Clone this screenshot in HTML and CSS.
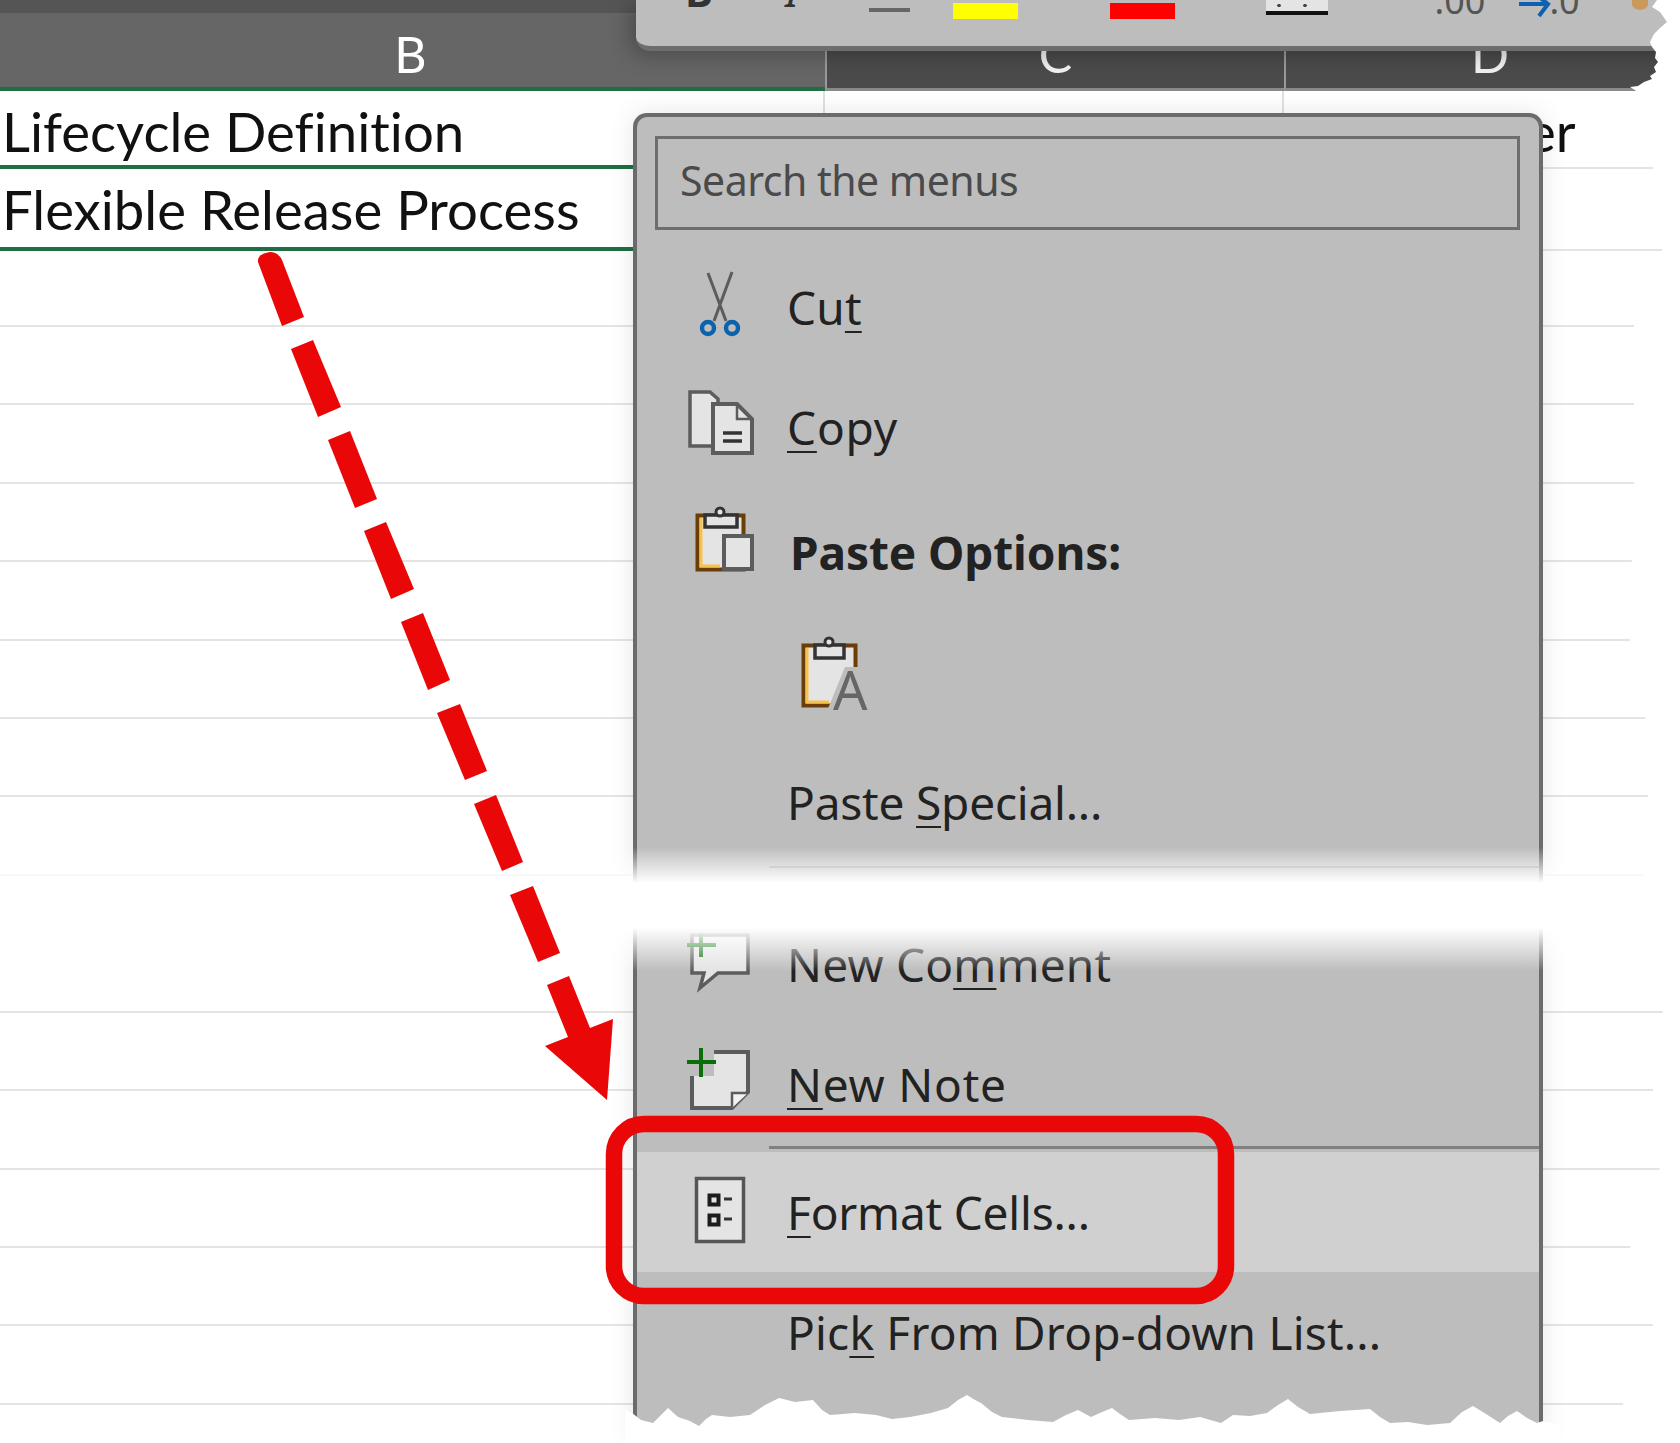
FILE: index.html
```html
<!DOCTYPE html>
<html lang="en">
<head>
    <meta charset="UTF-8">
    <title>Format Cells context menu</title>
    <link rel="stylesheet" href="styles.css">
</head>
<body>
    <div class="page">
        <!-- Sheet -->
        <div class="top-band"></div>
        <div class="columns">
            <div class="col col-b">B</div>
            <div class="col col-c">C</div>
            <div class="col col-d">D</div>
        </div>

        <div class="row row-one">
            <div class="cell cell-b">Lifecycle Definition</div>
            <div class="cell cell-c"></div>
            <div class="cell cell-d">er</div>
        </div>
        <div class="row row-two">
            <div class="cell cell-b">Flexible Release Process</div>
            <div class="cell cell-c"></div>
            <div class="cell cell-d"></div>
        </div>
        <div class="blank short"></div>
        <div class="blank"></div>
        <div class="blank"></div>
        <div class="blank"></div>
        <div class="blank"></div>
        <div class="blank"></div>
        <div class="blank"></div>
        <div class="blank"></div>
        <div class="blank tall"></div>
        <div class="blank"></div>
        <div class="blank"></div>
        <div class="blank"></div>
        <div class="blank"></div>
        <div class="blank"></div>

        <!-- Mini toolbar -->
        <div class="toolbar">
            <span class="tool-glyph bold">B</span>
            <span class="tool-glyph italic">I</span>
            <span class="tool-dash"></span>
            <span class="swatch yellow"></span>
            <span class="swatch red"></span>
            <span class="tool-border"></span>
            <span class="tool-num zeros">.00</span>
            <svg class="tool-arrow" width="32" height="18" viewBox="0 0 32 18">
                <path d="M0 4H28M20 -3L29 4L20 16" fill="none" stroke="#1060b0" stroke-width="4"/>
            </svg>
            <span class="tool-num zero">.0</span>
            <span class="tool-blob"></span>
        </div>

        <!-- Context menu -->
        <div class="menu">
            <div class="search">Search the menus</div>

            <div class="item">
                <svg class="icon" viewBox="0 0 80 80">
                    <path d="M28 4L46 52M52 3L34 52" fill="none" stroke="#5c5c5c" stroke-width="3"/>
                    <circle cx="28" cy="59" r="6" fill="none" stroke="#0b62ad" stroke-width="4.5"/>
                    <circle cx="52" cy="59" r="6" fill="none" stroke="#0b62ad" stroke-width="4.5"/>
                </svg>
                <span>Cu<u>t</u></span>
            </div>

            <div class="item">
                <svg class="icon" viewBox="0 0 80 80">
                    <path d="M10 3H30L38 10V57H10Z" fill="#e4e4e4" stroke="#5c5c5c" stroke-width="3.5"/>
                    <path d="M33 15H57L72 30V64H33Z" fill="#e4e4e4" stroke="#5c5c5c" stroke-width="4"/>
                    <path d="M57 15V30H72" fill="none" stroke="#5c5c5c" stroke-width="2.5"/>
                    <path d="M43 44H62M43 52H62" stroke="#333" stroke-width="3.5"/>
                </svg>
                <span class="wide"><u>C</u>opy</span>
            </div>

            <div class="item paste-head">
                <svg class="icon" viewBox="0 0 80 80">
                    <rect x="17.5" y="5.5" width="46" height="54" fill="#e4e4e4" stroke="#6b3d08" stroke-width="4"/>
                    <path d="M21 8V56H40" fill="none" stroke="#f5c24f" stroke-width="3"/>
                    <path d="M25 5H57V17H25Z" fill="#e4e4e4" stroke="#333" stroke-width="3.5"/>
                    <circle cx="40" cy="2" r="4" fill="#e4e4e4" stroke="#333" stroke-width="3"/>
                    <rect x="44" y="26" width="28" height="33" fill="#e4e4e4" stroke="#5c5c5c" stroke-width="4"/>
                </svg>
                <span class="head-label">Paste Options:</span>
            </div>

            <div class="item icon-only">
                <svg class="icon" viewBox="0 0 80 80">
                    <rect x="8.5" y="10.5" width="52" height="60" fill="#e4e4e4" stroke="#6b3d08" stroke-width="4"/>
                    <path d="M12 13V67H34" fill="none" stroke="#f5c24f" stroke-width="3"/>
                    <path d="M20 10H49V23H20Z" fill="#e4e4e4" stroke="#333" stroke-width="3.5"/>
                    <circle cx="34" cy="7" r="4" fill="#e4e4e4" stroke="#333" stroke-width="3"/>
                    <path d="M50 32H66V76H32Z" fill="#bdbdbd"/>
                    <text class="icon-letter" x="38" y="75">A</text>
                </svg>
            </div>

            <div class="item special">
                <span class="label-only tight">Paste <u>S</u>pecial...</span>
            </div>
            <div class="sep sep-soft"></div>

            <div class="item">
                <svg class="icon" viewBox="0 0 80 80">
                    <path d="M12 9H68V47H38L20 62L24 47H12Z" fill="#e4e4e4" stroke="#5c5c5c" stroke-width="3.5"/>
                    <path d="M7 19H36M21 7V31" stroke="#0a6e0a" stroke-width="4"/>
                </svg>
                <span>New Co<u>m</u>ment</span>
            </div>

            <div class="item">
                <svg class="icon" viewBox="0 0 80 80">
                    <path d="M12 6H68V46L52 62H12Z" fill="#e4e4e4" stroke="#5c5c5c" stroke-width="4"/>
                    <path d="M52 62V47H68" fill="#f2f2f2" stroke="#5c5c5c" stroke-width="2.5"/>
                    <rect x="2" y="0" width="32" height="30" fill="#bdbdbd"/>
                    <path d="M7 16H36M21 2V31" stroke="#0a6e0a" stroke-width="4"/>
                </svg>
                <span class="wide"><u>N</u>ew Note</span>
            </div>
            <div class="sep sep-hard"></div>

            <div class="item active">
                <svg class="icon" viewBox="0 0 80 80">
                    <rect x="16.5" y="6.5" width="47" height="63" fill="#e4e4e4" stroke="#555" stroke-width="3.5"/>
                    <rect x="29.5" y="23.5" width="9" height="9" fill="#e4e4e4" stroke="#1c1c1c" stroke-width="4"/>
                    <rect x="29.5" y="43.5" width="9" height="9" fill="#e4e4e4" stroke="#1c1c1c" stroke-width="4"/>
                    <path d="M44 27H52M44 47H52" stroke="#333" stroke-width="3"/>
                </svg>
                <span class="tight"><u>F</u>ormat Cells...</span>
            </div>

            <div class="item pick">
                <span class="label-only">Pic<u>k</u> From Drop-down List...</span>
            </div>
        </div>

        <!-- Torn out strip in the middle of the capture -->
        <div class="tear"></div>

        <!-- Callouts and torn paper edges -->
        <svg class="marks" width="1680" height="1443" viewBox="0 0 1680 1443">
            <path fill="#fff" d="M1657 0L1652 7L1660 12L1667 22L1660 28L1654 34L1650 42L1652 47L1656 52L1655 58L1658 62L1654 67L1656 72L1650 76L1652 79L1644 82L1638 86L1630 87L1638 92L1648 120L1653 168L1659 210L1663 247L1650 290L1634 325L1630 365L1634 404L1640 445L1634 482L1628 520L1632 560L1626 600L1630 640L1644 700L1650 780L1640 860L1655 940L1663 1011L1655 1050L1653 1090L1650 1130L1660 1168L1645 1210L1630 1246L1640 1285L1653 1325L1640 1365L1623 1404L1630 1443H1680V0Z"/>
            <path fill="#fff" d="M625 1443V1410L632 1413L641 1420L653 1423L661 1415L668 1408L678 1417L690 1421L699 1426L706 1419L712 1415L730 1417L750 1415L765 1405L779 1398L795 1402L813 1400L822 1410L830 1415L855 1413L876 1415L892 1419L910 1417L931 1413L948 1408L958 1400L967 1395L975 1400L981 1403L992 1412L1002 1417L1028 1420L1053 1422L1066 1415L1078 1410L1091 1417L1102 1412L1112 1408L1120 1414L1129 1420L1155 1418L1179 1420L1200 1417L1221 1423L1233 1415L1250 1416L1267 1413L1278 1405L1288 1399L1298 1407L1310 1414L1340 1411L1370 1409L1380 1417L1390 1423L1408 1422L1427 1425L1450 1423L1462 1412L1473 1406L1486 1414L1500 1423L1508 1416L1517 1411L1527 1418L1537 1423L1543 1421L1560 1425V1443Z"/>
            <g fill="#e90707">
                <path d="M258 262Q257 254 270 252Q278 252 282 260L304 317L282 326Z"/>
                <path d="M291 349L313 340L341 407L318 417Z"/>
                <path d="M328 440L350 431L377 499L355 508Z"/>
                <path d="M364 531L386 522L414 589L391 599Z"/>
                <path d="M401 622L423 613L450 680L428 690Z"/>
                <path d="M437 713L460 704L487 771L465 780Z"/>
                <path d="M474 804L496 795L523 862L502 871Z"/>
                <path d="M510 895L533 886L560 953L538 962Z"/>
                <path d="M547 985L569 976L590 1028L613 1019L607 1100L545 1046L568 1037Z"/>
            </g>
            <rect x="614" y="1124" width="612" height="172" rx="30" fill="none" stroke="#e90707" stroke-width="16.5"/>
        </svg>
    </div>
</body>
</html>
```

FILE: styles.css
```css
/* General Styles */
body {
    margin: 0;
    background: #fff;
    font-family: 'Noto Sans', sans-serif;
    overflow: hidden;
}

.page {
    position: relative;
    width: 1680px;
    height: 1443px;
    overflow: hidden;
}

/* Column Headers */
.top-band {
    height: 13px;
    background: #555;
}

.columns {
    display: grid;
    grid-template-columns: 825px 459px 1fr;
    height: 78px;
    font-family: 'Lato', sans-serif;
    font-size: 50px;
    line-height: 82px;
    text-align: center;
    color: #f2f2f2;
}

.col {
    box-sizing: border-box;
    height: 78px;
    overflow: hidden;
}

.col-b {
    background: #666;
    color: #fff;
    border-bottom: 4px solid #1f6e43;
    padding-right: 4px;
}

.col-c, .col-d {
    background: #4b4b4b;
    border-bottom: 3px solid #8a8a8a;
    border-left: 2px solid #9a9a9a;
}

.col-d {
    padding-left: 14px;
}

/* Rows */
.row {
    display: grid;
    grid-template-columns: 825px 459px 1fr;
    font-family: 'Lato', sans-serif;
    font-size: 54.5px;
    font-variant-ligatures: none;
    color: #111;
}

.row-one {
    height: 78px;
    line-height: 80px;
}

.row-two {
    height: 82px;
    line-height: 81px;
}

.cell {
    box-sizing: border-box;
    border-bottom: 2px solid #e4e4e4;
    white-space: nowrap;
    overflow: hidden;
}

.cell-b {
    padding-left: 2px;
    border-bottom: 4px solid #1f6e43;
    border-right: 2px solid #e0e0e0;
}

.cell-c {
    border-right: 2px solid #e0e0e0;
}

.cell-d {
    padding-left: 243px;
}

.blank {
    box-sizing: border-box;
    height: 78.4px;
    border-bottom: 2px solid #e4e4e4;
}

.blank.short {
    height: 76px;
}

.blank.tall {
    height: 137.2px;
}

/* Mini Toolbar */
.toolbar {
    position: absolute;
    top: 0;
    left: 636px;
    width: 1044px;
    height: 51px;
    box-sizing: border-box;
    display: flex;
    align-items: flex-start;
    background: #bdbdbd;
    border-bottom: 5px solid #6d6d6d;
    border-bottom-left-radius: 14px;
    box-shadow: -6px 4px 22px rgba(0, 0, 0, 0.28);
}

.tool-glyph {
    margin-top: -28px;
    font-size: 42px;
    line-height: 38px;
    color: #333;
}

.bold {
    margin-left: 49px;
    font-weight: bold;
}

.italic {
    margin-left: 72px;
    font-style: italic;
}

.tool-dash {
    width: 41px;
    height: 4px;
    margin: 8px 0 0 70px;
    background: #666;
}

.swatch {
    width: 65px;
    height: 16px;
    margin-top: 3px;
    margin-left: 43px;
}

.yellow {
    background: #ff0;
}

.red {
    margin-left: 92px;
    background: #f00;
}

.tool-border {
    width: 62px;
    height: 11px;
    margin: 0 0 0 91px;
    background-color: #e4e4e4;
    background-image: radial-gradient(circle, #444 1.5px, transparent 2px);
    background-size: 26px 11px;
    border-bottom: 4px solid #111;
}

.tool-num {
    margin-top: -17px;
    font-size: 36px;
    line-height: 36px;
    color: #555;
}

.zeros {
    margin-left: 107px;
}

.tool-arrow {
    margin: 0 0 0 34px;
    overflow: visible;
}

.zero {
    margin-left: -2px;
}

.tool-blob {
    width: 16px;
    height: 12px;
    margin: -2px 0 0 52px;
    background: #c99a5a;
    border-radius: 0 0 50% 50%;
}

/* Context Menu */
.menu {
    position: absolute;
    top: 113px;
    left: 633px;
    width: 910px;
    height: 1330px;
    box-sizing: border-box;
    background: #bdbdbd;
    border: 4px solid #6b6b6b;
    border-bottom: none;
    border-radius: 14px 14px 0 0;
    box-shadow: 0 0 26px rgba(0, 0, 0, 0.1);
    color: #222;
    font-size: 46px;
    letter-spacing: 0.2px;
}

.search {
    box-sizing: border-box;
    height: 94px;
    margin: 19px 19px 19px 18px;
    padding-left: 22px;
    border: 3px solid #6e6e6e;
    font-size: 41px;
    line-height: 82px;
    letter-spacing: -0.5px;
    color: #4a4a4a;
}

.item {
    display: flex;
    align-items: center;
    height: 120px;
    white-space: nowrap;
}

.item span {
    margin-bottom: 4px;
}

.active span, .pick span {
    margin-bottom: 0;
}

.item .wide {
    letter-spacing: 0.8px;
}

.item .tight {
    letter-spacing: -0.2px;
}

.icon {
    flex: none;
    width: 80px;
    height: 80px;
    margin: 0 27px 0 43px;
    overflow: visible;
}

.item u {
    text-decoration-thickness: 2px;
    text-underline-offset: 6px;
}

.paste-head {
    height: 126px;
}

.paste-head .icon {
    margin-top: -4px;
}

.item .head-label {
    margin: 0 0 0 3px;
    font-weight: bold;
    letter-spacing: -0.1px;
}

.icon-only .icon {
    margin-left: 158px;
}

.icon-letter {
    font-family: 'Noto Sans', sans-serif;
    font-size: 54px;
    letter-spacing: 0;
    fill: #666;
}

.label-only {
    margin-left: 150px;
}

.special {
    margin-top: 9px;
}

.sep {
    margin-left: 132px;
}

.sep-soft {
    height: 2px;
    margin-top: 2px;
    margin-bottom: 38px;
    background: #999;
}

.sep-hard {
    height: 3px;
    margin-bottom: 3px;
    background: #808080;
}

.active {
    background: #d0d0d0;
}

/* Torn Strip */
.tear {
    position: absolute;
    top: 847px;
    left: 0;
    width: 100%;
    height: 124px;
    background: linear-gradient(to bottom, rgba(255, 255, 255, 0) 0%, #fff 29%, #fff 65%, rgba(255, 255, 255, 0) 100%);
}

/* Callouts */
.marks {
    position: absolute;
    top: 0;
    left: 0;
    pointer-events: none;
}
```
